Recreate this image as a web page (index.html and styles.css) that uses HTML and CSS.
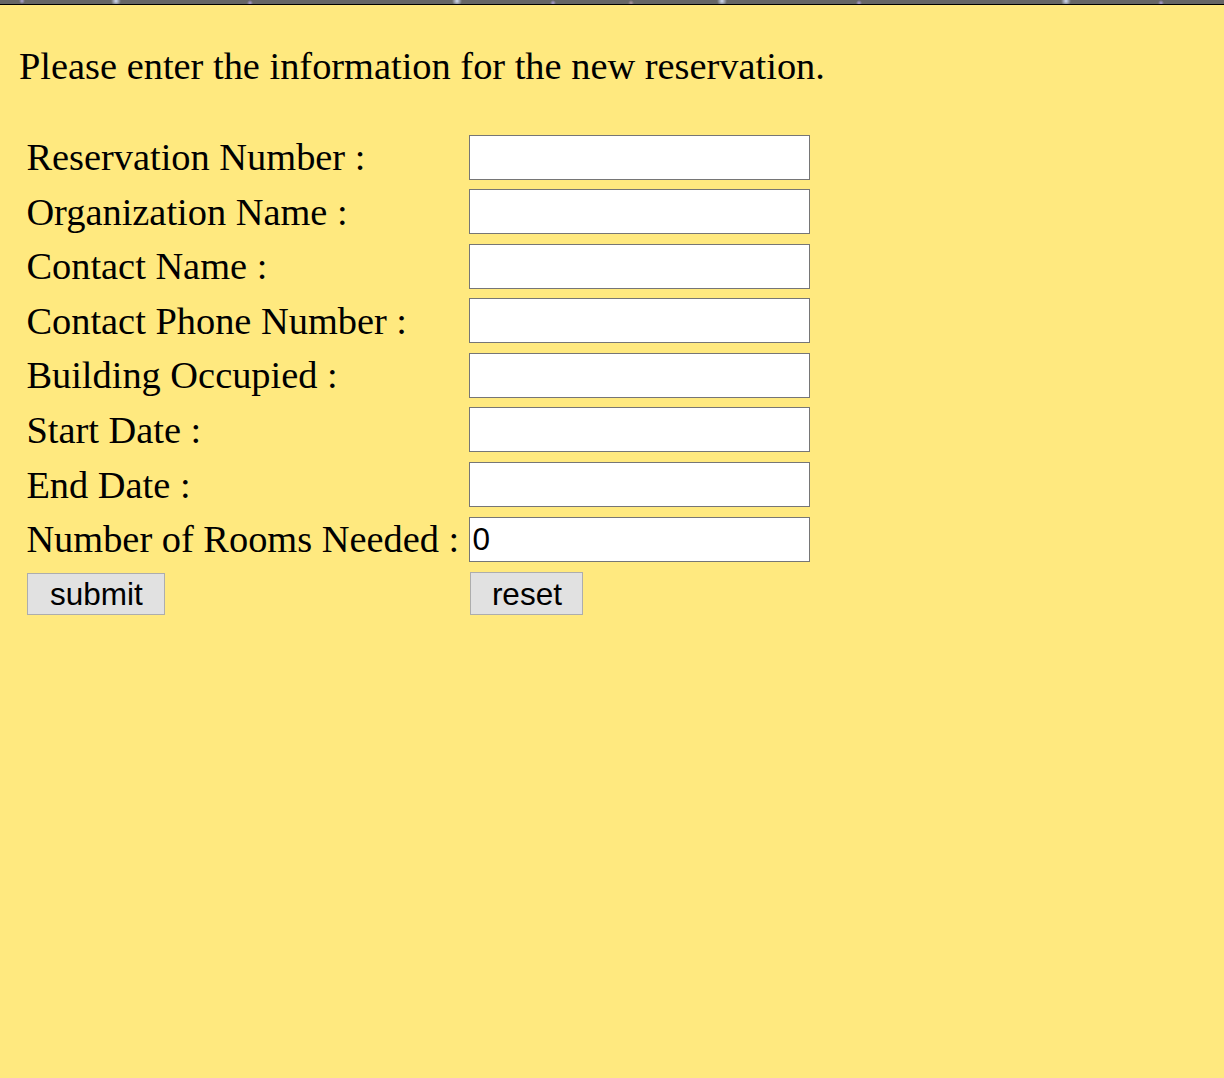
FILE: index.html
```html
<!DOCTYPE html>
<html>
<head>
<meta charset="utf-8">
<title>New Reservation</title>
<link rel="stylesheet" href="styles.css">
</head>
<body>
<div class="topbar"></div>
<div class="page">
  <p class="intro">Please enter the information for the new reservation.</p>
  <form class="form">
    <label class="lbl" for="rn">Reservation Number :</label>
    <input class="field" id="rn" type="text">
    <label class="lbl" for="on">Organization Name :</label>
    <input class="field" id="on" type="text">
    <label class="lbl" for="cn">Contact Name :</label>
    <input class="field" id="cn" type="text">
    <label class="lbl" for="cp">Contact Phone Number :</label>
    <input class="field" id="cp" type="text">
    <label class="lbl" for="bo">Building Occupied :</label>
    <input class="field" id="bo" type="text">
    <label class="lbl" for="sd">Start Date :</label>
    <input class="field" id="sd" type="text">
    <label class="lbl" for="ed">End Date :</label>
    <input class="field" id="ed" type="text">
    <label class="lbl" for="nr">Number of Rooms Needed :</label>
    <input class="field" id="nr" type="text" value="0">
    <div class="cell-btn"><button type="button" class="btn btn-submit">submit</button></div>
    <div class="cell-btn"><button type="reset" class="btn btn-reset">reset</button></div>
  </form>
</div>
</body>
</html>
```

FILE: styles.css
```css
html, body {
  margin: 0;
  padding: 0;
}
body {
  background: #FFE97F;
  min-height: 1078px;
  font-family: "Liberation Serif", "Times New Roman", serif;
  color: #000;
}
.topbar {
  height: 4px;
  border-bottom: 1px solid #000;
  background-color: #666666;
  background-image:
    radial-gradient(circle at 22px 1px, rgba(200,190,255,0.7) 0, rgba(200,190,255,0) 3px),
    radial-gradient(circle at 116px 1px, rgba(220,230,255,0.9) 0, rgba(220,230,255,0) 5px),
    radial-gradient(circle at 250px 3px, rgba(200,180,255,0.7) 0, rgba(200,180,255,0) 3px),
    radial-gradient(circle at 457px 1px, rgba(220,230,255,0.9) 0, rgba(220,230,255,0) 5px),
    radial-gradient(circle at 553px 3px, rgba(200,180,255,0.7) 0, rgba(200,180,255,0) 3px),
    radial-gradient(circle at 631px 3px, rgba(220,180,200,0.6) 0, rgba(220,180,200,0) 3px),
    radial-gradient(circle at 722px 1px, rgba(220,230,255,0.9) 0, rgba(220,230,255,0) 5px),
    radial-gradient(circle at 859px 3px, rgba(200,180,255,0.7) 0, rgba(200,180,255,0) 3px),
    radial-gradient(circle at 1066px 1px, rgba(220,230,255,0.9) 0, rgba(220,230,255,0) 5px),
    radial-gradient(circle at 1161px 3px, rgba(200,180,255,0.7) 0, rgba(200,180,255,0) 3px);
}
.page {
  padding: 0 19px;
}
.intro {
  font-size: 38.4px;
  margin: 39px 0 0 0;
}
.form {
  display: grid;
  grid-template-columns: 443px 341px;
  grid-auto-rows: 45px;
  row-gap: 9.6px;
  align-items: center;
  margin: 46.5px 0 0 7.4px;
}
.lbl {
  font-size: 38.4px;
  line-height: 44px;
  white-space: nowrap;
}
.field {
  box-sizing: border-box;
  width: 341px;
  height: 45px;
  margin: 0;
  padding: 0 2px;
  border: 1px solid #767676;
  background: #fff;
  font-family: "Liberation Sans", Arial, sans-serif;
  font-size: 31.5px;
  color: #000;
  outline: none;
}
.cell-btn {
  height: 44px;
  display: flex;
  align-items: center;
}
.btn {
  box-sizing: border-box;
  margin: 0;
  padding: 2px 0 0 0;
  border: 1px solid #ADADAD;
  background: #E1E1E1;
  font-family: "Liberation Sans", Arial, sans-serif;
  font-size: 31.5px;
  color: #000;
  border-radius: 0;
}
.btn-submit {
  width: 138px;
  height: 42px;
  margin-left: 1px;
}
.btn-reset {
  width: 113px;
  height: 43px;
  margin-left: 1px;
}
```
